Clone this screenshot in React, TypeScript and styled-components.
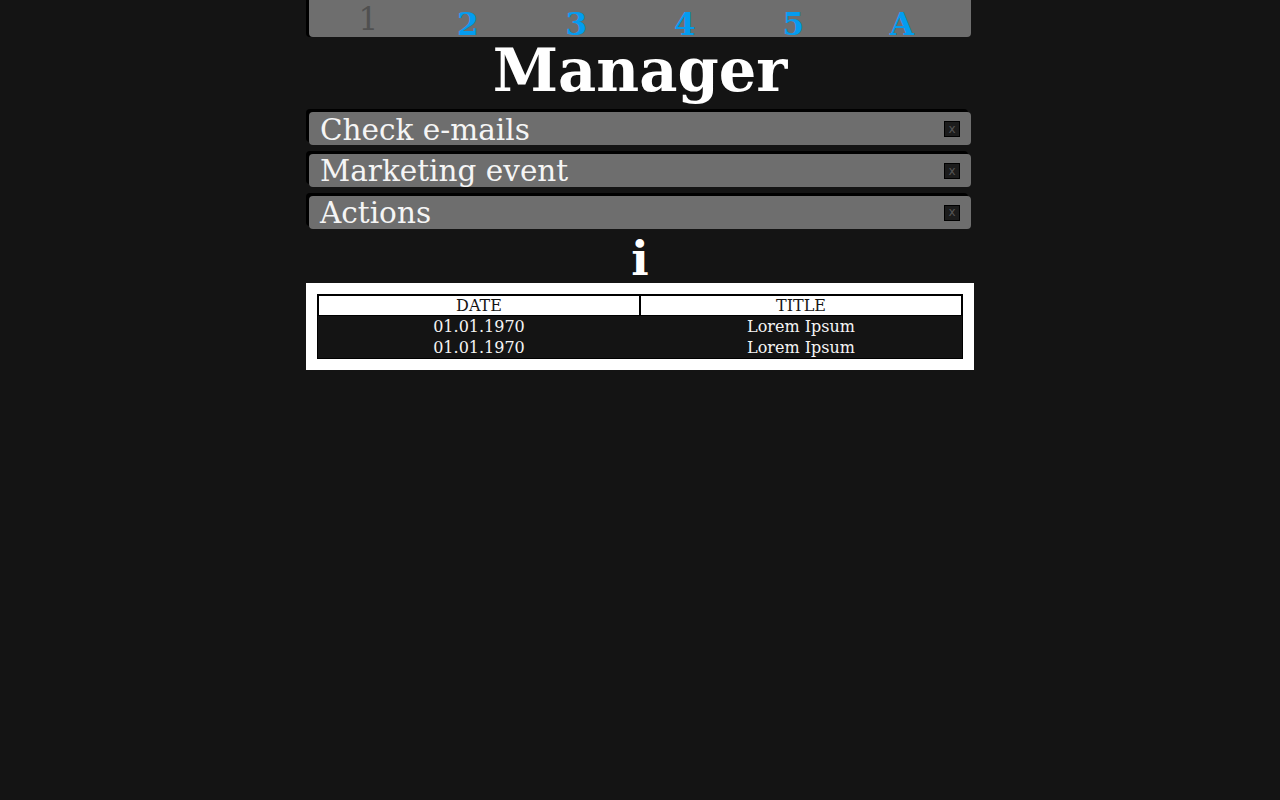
import styled, { createGlobalStyle } from 'styled-components'

const GlobalStyle = createGlobalStyle`
  body {
    margin: 0;
    background: #141414;
    font-family: 'DejaVu Serif', 'Liberation Serif', serif;
  }
`

const Page = styled.div`
  width: 668px;
  margin: 0 auto;
`

const Nav = styled.nav`
  margin: 0 3px;
  height: 37px;
  box-sizing: border-box;
  padding-left: 14px;
  display: grid;
  grid-template-columns: 90.5px repeat(5, 108.5px);
  align-items: start;
  overflow: hidden;
  background: #6e6e6e;
  border-radius: 0 0 4px 4px;
  box-shadow: -3px 0 0 #000;
`

const NavLink = styled.a<{ $current?: boolean }>`
  padding-top: ${p => (p.$current ? '6px' : '10.5px')};
  text-align: center;
  font-size: 31px;
  line-height: 26px;
  font-weight: ${p => (p.$current ? 'normal' : 'bold')};
  color: ${p => (p.$current ? '#505050' : '#049cf0')};
  text-decoration: none;
`

const Title = styled.h1`
  margin: 2px 0 9px;
  text-align: center;
  font-size: 59px;
  line-height: 64px;
  font-weight: bold;
  color: #fff;
`

const TaskList = styled.ul`
  list-style: none;
  margin: 0;
  padding: 0;
  display: flex;
  flex-direction: column;
  gap: 8.75px;
`

const Task = styled.li`
  margin: 0 3px;
  height: 33px;
  box-sizing: border-box;
  padding: 1.5px 11px 0 11px;
  display: flex;
  align-items: flex-start;
  background: #6e6e6e;
  border-radius: 4px;
  box-shadow: -3px -3px 0 #000;
  font-size: 29.5px;
  line-height: 33px;
  color: #f5f5f5;
`

const TaskName = styled.span`
  flex: 1;
  white-space: nowrap;
`

const CloseButton = styled.button`
  align-self: center;
  width: 16px;
  height: 16px;
  padding: 0;
  box-sizing: border-box;
  border: 1px solid #000;
  background: #1c1c1c;
  color: #555;
  font-family: 'DejaVu Sans', sans-serif;
  font-size: 12px;
  line-height: 13px;
  cursor: pointer;
`

const Info = styled.div`
  padding-top: 6px;
  text-align: center;
  font-size: 46px;
  line-height: 48px;
  font-weight: bold;
  color: #fff;
`

const TableBox = styled.div`
  padding: 11px;
  background: #fff;
`

const Table = styled.table`
  width: 100%;
  table-layout: fixed;
  border-collapse: separate;
  border-spacing: 0;
  border: 1px solid #000;
  background: #141414;
  font-size: 16px;
  line-height: 19px;
`

const Th = styled.th`
  padding: 0;
  border: 1px solid #000;
  background: #fff;
  color: #141414;
  font-weight: normal;
`

const Td = styled.td`
  padding: 1px;
  text-align: center;
  color: #f5f5f5;
`

const tabs = ['1', '2', '3', '4', '5', 'A']
const tasks = ['Check e-mails', 'Marketing event', 'Actions']
const events = [
  { date: '01.01.1970', title: 'Lorem Ipsum' },
  { date: '01.01.1970', title: 'Lorem Ipsum' },
]

const App = () => (
  <>
    <GlobalStyle />
    <Page>
      <Nav>
        {tabs.map((tab, i) => (
          <NavLink key={tab} href="#" $current={i === 0}>
            {tab}
          </NavLink>
        ))}
      </Nav>
      <Title>Manager</Title>
      <TaskList>
        {tasks.map(task => (
          <Task key={task}>
            <TaskName>{task}</TaskName>
            <CloseButton>x</CloseButton>
          </Task>
        ))}
      </TaskList>
      <Info>i</Info>
      <TableBox>
        <Table>
          <thead>
            <tr>
              <Th>DATE</Th>
              <Th>TITLE</Th>
            </tr>
          </thead>
          <tbody>
            {events.map((ev, i) => (
              <tr key={i}>
                <Td>{ev.date}</Td>
                <Td>{ev.title}</Td>
              </tr>
            ))}
          </tbody>
        </Table>
      </TableBox>
    </Page>
  </>
)

export default App
